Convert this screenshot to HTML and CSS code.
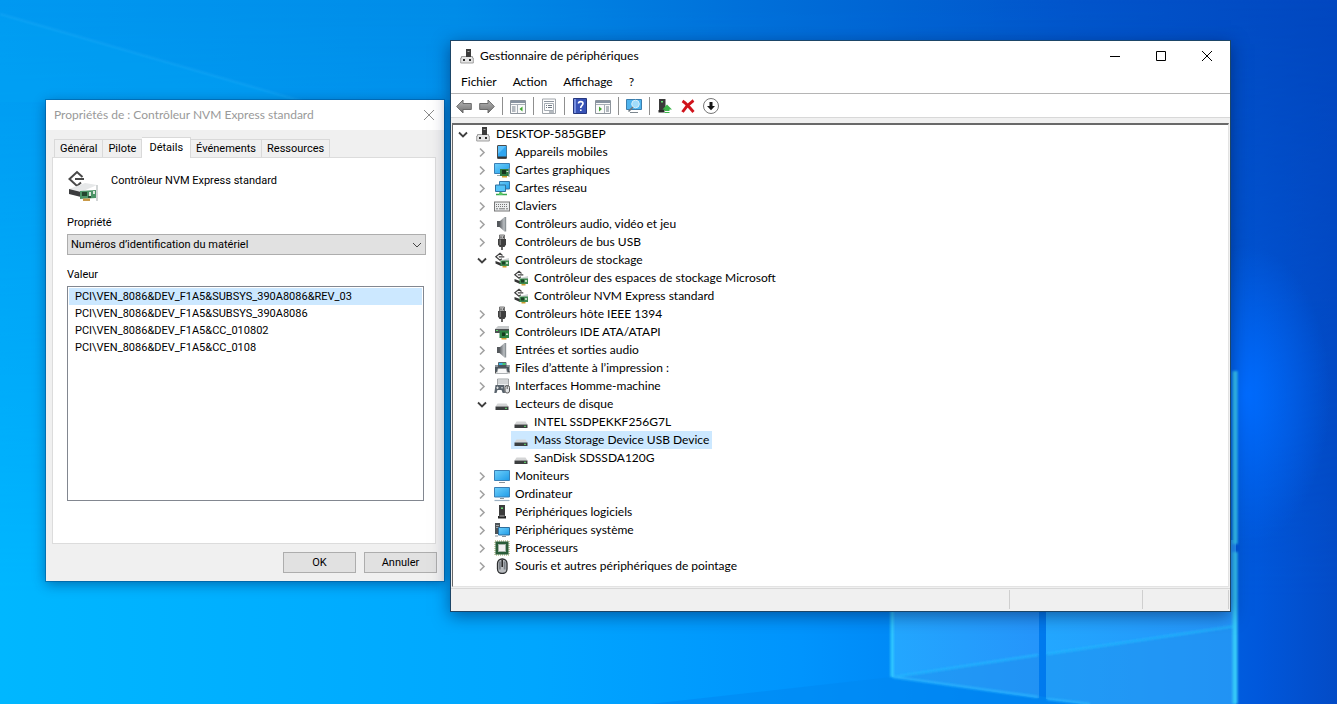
FILE: index.html
```html
<!DOCTYPE html>
<html lang="fr">
<head>
<meta charset="utf-8">
<title>Gestionnaire de périphériques</title>
<link rel="stylesheet" href="styles.css">
</head>
<body>
<svg class="sprites" aria-hidden="true">
  <defs>
    <linearGradient id="g-screen" x1="0" y1="0" x2="1" y2="1"><stop offset="0" stop-color="#6fd0fb"/><stop offset="1" stop-color="#1e9be8"/></linearGradient>
    <linearGradient id="g-grey" x1="0" y1="0" x2="0" y2="1"><stop offset="0" stop-color="#b8b8b8"/><stop offset="1" stop-color="#707070"/></linearGradient>
    <linearGradient id="g-speaker" x1="0" y1="0" x2="1" y2="0"><stop offset="0" stop-color="#5c6064"/><stop offset="1" stop-color="#c4c8cc"/></linearGradient>
  </defs>
  <symbol id="chev-right" viewBox="0 0 16 16"><path d="M6 4.500L10 8.500L6 12.500" fill="none" stroke="#a3a3a3" stroke-width="1.600"/></symbol>
  <symbol id="chev-down" viewBox="0 0 16 16"><path d="M4 6.500L8 10.500L12 6.500" fill="none" stroke="#404040" stroke-width="1.800"/></symbol>
  <symbol id="i-root" viewBox="0 0 16 16">
    <path d="M7 1h5v8H7z" fill="#3b3b3b"/><path d="M8.500 3h2v1h-2z" fill="#a8a8a8"/>
    <path d="M2.500 8.500h11V10h.8v5H1.700v-5h.8z" fill="#e6e6e6" stroke="#8c8c8c" stroke-width=".8"/>
    <path d="M7 5h5v4H7z" fill="#3b3b3b"/><path d="M4 11h2v2H4zM10 11h2v2h-2z" fill="#2e2e2e"/>
  </symbol>
  <symbol id="i-mobile" viewBox="0 0 16 16"><rect x="3.500" y="1.500" width="9" height="13" rx=".5" fill="#333" stroke="#4b4b4b"/><rect x="4" y="2" width="8.500" height="10.500" fill="#2fa5f0"/><path d="M4 2h8L4 10z" fill="#5cc0fb"/></symbol>
  <symbol id="i-display" viewBox="0 0 16 16">
    <path d="M.5 1.500h15v10H.5z" fill="url(#g-screen)" stroke="#3a7fb4"/><path d="M3 13.500h5" stroke="#9aa" />
    <path d="M6 7h9v7H6z" fill="#2f7a40"/><path d="M8 8h4v4H8z" fill="#17361d"/><path d="M12.500 9h2v1h-2z" fill="#d9dfd0"/><path d="M8 14h5v1.500H8z" fill="#cda12f"/><path d="M15 6v9" stroke="#8b9a8b"/>
  </symbol>
  <symbol id="i-network" viewBox="0 0 16 16">
    <path d="M5.500 1.500h10v7.500h-10z" fill="url(#g-screen)" stroke="#3377a8"/>
    <path d="M1.500 5h10v6.500h-10z" fill="#54c3f8" stroke="#2e719f"/>
    <path d="M6.500 12v2M2 14.500h11" stroke="#3aa84c" stroke-width="1.600"/><path d="M5 12.500h3.500V15H5z" fill="#58c766"/>
  </symbol>
  <symbol id="i-keyboard" viewBox="0 0 16 16"><rect x=".5" y="4" width="15" height="9" fill="#eceeef" stroke="#777"/><path d="M2 6.500h12M2 8.500h12" stroke="#777" stroke-dasharray="1 1"/><path d="M2 10.800h2M5 10.800h6M12 10.800h2" stroke="#777"/></symbol>
  <symbol id="i-audio" viewBox="0 0 16 16"><path d="M3 5h3v6H3z" fill="#54585c"/><path d="M5.500 5.500L10.500 1v14.500L5.500 11z" fill="url(#g-speaker)"/><path d="M11.300 1v14.500" stroke="#8d9397" stroke-width="1.800"/></symbol>
  <symbol id="i-usb" viewBox="0 0 16 16"><path d="M5.500 1h5v4h-5z" fill="#d8d8d8" stroke="#555" stroke-width=".8"/><path d="M6.500 2.300h1V4h-1zM8.800 2.300h1V4h-1z" fill="#333"/><path d="M4 5h8v5.500L10.500 13h-5L4 10.500z" fill="#3f3f3f"/><path d="M5.500 5.500h1.500V11H5.500z" fill="#777"/><path d="M8 12.500V16" stroke="#555" stroke-width="1.800"/></symbol>
  <symbol id="i-storage" viewBox="0 0 16 16">
    <path d="M8.500 3.500L6 1.300L1.800 4.800L6 8.300L7.800 6.800M4.800 4.800h5.500" fill="none" stroke="#404040" stroke-width="1.200"/>
    <path d="M7 8l8-2v4z" fill="#cfd3d4"/><path d="M1.500 9L7 11v3L1.500 11.500z" fill="#343434"/>
    <path d="M6.500 8.500H15V14H6.500z" fill="#3e8a50"/><path d="M8 9.500h3v3H8z" fill="#1b4225"/><path d="M12 10h2v2h-2z" fill="#b9d7bd"/><path d="M8.500 14h4v1.500h-4z" fill="#cc9c2e"/>
  </symbol>
  <symbol id="i-storage-large" viewBox="0 0 32 32">
    <path d="M15.500 7L10 2L2.500 9L10 16L14 12.500M8 9h9" fill="none" stroke="#484848" stroke-width="2"/>
    <path d="M2 19L18 13L30 15L14 22z" fill="#e6e8e9"/><path d="M2 19l12 3v5L2 24z" fill="#3b3c3e"/>
    <path d="M13 21l16-1v8l-16 1z" fill="#4c9467"/><path d="M15 22h5v4h-5z" fill="#24472f"/><path d="M22 22h2v4h-2zM26 21h2v3h-2z" fill="#dce8de"/><path d="M21 26h3v2h-3z" fill="#284f34"/><path d="M16 28.500h7V31h-7z" fill="#c99a4a"/><path d="M30 15v16" stroke="#bfc4c5" stroke-width="1.400"/>
  </symbol>
  <symbol id="i-ide" viewBox="0 0 16 16"><path d="M1 5l3-3h11v4H1z" fill="#c7cacb"/><path d="M1 5h14v4H1z" fill="#4f5254"/><path d="M2 6.500h2" stroke="#5ee06b"/><path d="M5.500 6.500H15V14H5.500z" fill="#2f8446"/><path d="M8 8.500h3v3.500H8z" fill="#173c20"/><path d="M12 9.500h2v1.500h-2z" fill="#dbe8da"/><path d="M7.500 14h5v1.500h-5z" fill="#cda12f"/></symbol>
  <symbol id="i-printer" viewBox="0 0 16 16"><path d="M4.500 2.500h7.500v4H4.500z" fill="#36b3e8" stroke="#56636c"/><path d="M8.500 3h3v2h-3z" fill="#4bc267"/><path d="M1 5h14.500v7H1z" fill="#4b555d"/><path d="M1 5h3v2H1zM12.500 5h3v2h-3z" fill="#8a949b"/><path d="M4 8.500h8.500l1 5h-11z" fill="#f7f7f7" stroke="#8a8f93" stroke-width=".7"/><path d="M1.500 11v2.500M15 11v2.500" stroke="#555"/></symbol>
  <symbol id="i-hid" viewBox="0 0 16 16"><path d="M3.500 1h11v7h-11z" fill="#eef0f1" stroke="#8b8f92" stroke-width=".8"/><path d="M4.500 3h9M4.500 5h9" stroke="#7c8185" stroke-dasharray="1 1"/><path d="M1.500 7h8.500l1 8H8.700L7.500 12h-4L2.500 15H.3z" fill="#59636c"/><path d="M3.500 8.500v2.500M2.200 9.800h2.600M7 9.800h2" stroke="#eee" stroke-width=".8"/><rect x="11" y="7.500" width="4.500" height="7.500" rx="2" fill="#e2e4e6" stroke="#555"/><path d="M13.200 8v3" stroke="#555"/></symbol>
  <symbol id="i-disk" viewBox="0 0 16 16"><path d="M3.500 7.500h9L14.500 10.500h-13z" fill="#d4d5d6"/><path d="M1.500 10.500h13V14h-13z" fill="#3c3f40"/><path d="M11 12.300h2" stroke="#63e06e"/></symbol>
  <symbol id="i-monitor" viewBox="0 0 16 16"><path d="M.5 2.500h15v10H.5z" fill="url(#g-screen)" stroke="#3a7fb4"/><path d="M5 14.500h6" stroke="#8a9299"/></symbol>
  <symbol id="i-computer" viewBox="0 0 16 16"><path d="M.5 1.500h15v9.500H.5z" fill="url(#g-screen)" stroke="#3a7fb4"/><path d="M6 12.500h4" stroke="#8a9299"/><path d="M.5 14.500h15" stroke="#9db2c4" stroke-width="1.200"/></symbol>
  <symbol id="i-software" viewBox="0 0 16 16"><path d="M5 1h6v11H5z" fill="#3c3c3c"/><path d="M7 3.500h2V5H7z" fill="#6be078"/><path d="M4 12h8v2.500H4z" fill="#262626"/><path d="M5.500 12h5" stroke="#aaa"/></symbol>
  <symbol id="i-system" viewBox="0 0 16 16"><path d="M1 1h5v11H1z" fill="#4d5357"/><path d="M2 3.500h3M2 5.500h3" stroke="#b5babd" stroke-width=".8"/><path d="M4.500 5.500h11v7.500h-11z" fill="url(#g-screen)" stroke="#2d6d9c"/><path d="M8 14.500h4M1 14h3" stroke="#8a9299"/></symbol>
  <symbol id="i-cpu" viewBox="0 0 16 16"><rect x="1" y="1" width="14" height="14" fill="none" stroke="#8e9c5a" stroke-dasharray="1 1"/><rect x="1.500" y="1.500" width="13" height="13" fill="#2a5d39"/><rect x="4.500" y="4.500" width="7" height="7" fill="#f1f1f1" stroke="#a6b5aa"/></symbol>
  <symbol id="i-mouse" viewBox="0 0 16 16"><rect x="3.500" y="1" width="9.500" height="14.500" rx="4.500" fill="#b9bcc0" stroke="#2d2f31" stroke-width="1.300"/><path d="M5 3.500h1.800v8H5zM9.700 3.500h1.800v8H9.700z" fill="#7b8086"/><path d="M8.200 2v7" stroke="#222" stroke-width="1.500"/></symbol>
  <symbol id="t-back" viewBox="0 0 16 16"><path d="M.7 8.500L7 2v3.500h8.300v6H7V15z" fill="url(#g-grey)" stroke="#6b6b6b"/></symbol>
  <symbol id="t-forward" viewBox="0 0 16 16"><path d="M15.300 8.500L9 2v3.500H.7v6H9V15z" fill="url(#g-grey)" stroke="#6b6b6b"/></symbol>
  <symbol id="t-tree" viewBox="0 0 16 16"><path d="M.5 2.500h15v13H.5z" fill="#fafafa" stroke="#8d949c"/><path d="M1 4h14" stroke="#8792a0" stroke-width="2"/><path d="M1 6.500h14M7.500 7v8" stroke="#a6adb5"/><path d="M2 9h3.500M2 11h3.500M2 13h3.500" stroke="#6f7a86"/><path d="M12.500 8.500v5L9.500 11z" fill="#3fa52f"/></symbol>
  <symbol id="t-props" viewBox="0 0 16 16"><path d="M1.500 1h13v14.500h-13z" fill="#fdfdfd" stroke="#a1a6ab"/><path d="M3 3.500h10" stroke="#8c949d"/><path d="M3.500 5.500h9v7h-9z" fill="none" stroke="#a6adb4"/><path d="M5 7.500h1M7 7.500h4M5 9.500h1M7 9.500h4M8 14h5" stroke="#6f7983"/></symbol>
  <symbol id="t-help" viewBox="0 0 16 16"><path d="M1.500.5h13v15h-13z" fill="#3853b6" stroke="#26377e"/><path d="M2 1h2v14H2z" fill="#7890df"/><path d="M6.500 5.500C6.500 3 11 3 11 5.500C11 7.500 8.700 7.300 8.700 10" fill="none" stroke="#fff" stroke-width="1.600"/><path d="M8 11.500h1.600V13H8z" fill="#fff"/></symbol>
  <symbol id="t-action" viewBox="0 0 16 16"><path d="M.5 2.500h15v13H.5z" fill="#fafafa" stroke="#8d949c"/><path d="M1 4h14" stroke="#8792a0" stroke-width="2"/><path d="M1 6.500h14M9.500 7v8" stroke="#a6adb5"/><path d="M11 9h3M11 11h3M11 13h3" stroke="#6f7a86"/><path d="M4 8.500v5L7 11z" fill="#3fa52f"/></symbol>
  <symbol id="t-scan" viewBox="0 0 16 16"><path d="M.5 1.500h15v10H.5z" fill="#4fb4ee" stroke="#3c7fae"/><path d="M4 14.500h8" stroke="#7c868e"/><circle cx="9.500" cy="6" r="3.800" fill="#a0dcfa" stroke="#d7effb" stroke-width="1"/><path d="M7 9L2.500 13.500" stroke="#6d777e" stroke-width="1.600"/></symbol>
  <symbol id="t-update" viewBox="0 0 16 16"><path d="M2 1h6.500v11H2z" fill="#3a3a3a"/><path d="M4 3h2v1.500H4z" fill="#67dd74"/><path d="M1.500 12h6v2.500h-6z" fill="#2a2a2a"/><path d="M10 6.500L15 11.500h-2.500V13h-5v-1.500H5.500z" fill="#3db54a"/><path d="M7.500 14.500h5" stroke="#3db54a"/></symbol>
  <symbol id="t-remove" viewBox="0 0 16 16"><path d="M2.500 3Q7 6 13.500 14M13.500 2.500Q7 7 2.500 14" fill="none" stroke="#d0131b" stroke-width="2.800"/></symbol>
  <symbol id="t-disable" viewBox="0 0 16 16"><circle cx="8" cy="8" r="7.500" fill="#fff" stroke="#777" stroke-width="1"/><path d="M6.500 4h3v4h2.500L8 12.300L4 8h2.500z" fill="#151515"/></symbol>
</svg>

<svg class="wallpaper" viewBox="0 0 1337 704" preserveAspectRatio="none" aria-hidden="true">
  <defs>
    <linearGradient id="w-base" x1="0" y1="0" x2="1" y2="0">
      <stop offset="0" stop-color="#0099f1"/><stop offset=".34" stop-color="#008ce8"/><stop offset=".55" stop-color="#0071da"/><stop offset=".8" stop-color="#0255cb"/><stop offset="1" stop-color="#0247c0"/>
    </linearGradient>
    <linearGradient id="w-low" x1="0" y1="0" x2="1" y2="0">
      <stop offset="0" stop-color="#00b7ff"/><stop offset=".4" stop-color="#00a6ff"/><stop offset=".6" stop-color="#0094fd"/><stop offset=".85" stop-color="#0070e8"/><stop offset=".94" stop-color="#0058dc"/><stop offset="1" stop-color="#034bc6"/>
    </linearGradient>
    <linearGradient id="w-fade" x1="0" y1="0" x2="0" y2="1"><stop offset="0" stop-color="#000"/><stop offset=".85" stop-color="#fff"/></linearGradient>
    <mask id="w-mask"><rect width="1337" height="704" fill="url(#w-fade)"/></mask>
    <radialGradient id="w-glow" gradientUnits="userSpaceOnUse" cx="0" cy="0" r="1" gradientTransform="translate(1245 395) scale(85 150)"><stop offset="0" stop-color="#006cff"/><stop offset="1" stop-color="#006cff" stop-opacity="0"/></radialGradient>
    <linearGradient id="w-pane" x1="0" y1="0" x2="1" y2="0"><stop offset="0" stop-color="#23a7ff"/><stop offset="1" stop-color="#2595fb"/></linearGradient>
    <filter id="w-soft"><feGaussianBlur stdDeviation="1"/></filter>
  </defs>
  <rect width="1337" height="704" fill="url(#w-base)"/>
  <rect width="1337" height="704" fill="url(#w-low)" mask="url(#w-mask)"/>
  <path d="M0 14L305 102H0z" fill="#00a4f4" opacity=".3"/>
  <path d="M0 14L305 102" stroke="#31b6fb" stroke-width="1.500" opacity=".4" filter="url(#w-soft)"/>
  <rect x="1100" y="200" width="237" height="400" fill="url(#w-glow)"/>
  <path d="M650 704L892 677L1100 704z" fill="#0088f2" opacity=".6"/>
  <path d="M892 540H1039V698L892 677z" fill="url(#w-pane)"/>
  <path d="M1046 540H1236V704H1085L1046 699z" fill="url(#w-pane)"/>
  <path d="M892 677L1039 655V698zM1046 654L1236 625V704H1085L1046 699z" fill="#1d8fee" opacity=".5"/>
  <g fill="none" filter="url(#w-soft)">
    <path d="M893 677L1038 655M1047 654L1236 626" stroke="#24b6ff" stroke-width="2"/>
    <path d="M893 677L1038 697M1047 699L1090 704" stroke="#2bb5ff" stroke-width="2"/>
    <path d="M892 560V677" stroke="#32ccff" stroke-width="3"/>
    <path d="M1235 371V544M1235 552V704" stroke="#35c8f8" stroke-width="5"/>
  </g>
</svg>

<section class="window dialog" aria-label="Propriétés">
  <header class="dialog-title">
    <h2>Propriétés de : Contrôleur NVM Express standard</h2>
    <button class="dialog-close" aria-label="Fermer"><svg viewBox="0 0 12 12"><path d="M1 1L11 11M11 1L1 11"/></svg></button>
  </header>
  <div class="dialog-body">
    <div class="tabs" role="tablist">
      <button class="tab" role="tab">Général</button>
      <button class="tab tab-wide" role="tab">Pilote</button>
      <button class="tab tab-active" role="tab" aria-selected="true">Détails</button>
      <button class="tab" role="tab">Événements</button>
      <button class="tab" role="tab">Ressources</button>
    </div>
    <div class="panel" role="tabpanel">
      <div class="device">
        <svg class="device-icon"><use href="#i-storage-large"/></svg>
        <span>Contrôleur NVM Express standard</span>
      </div>
      <label class="field-label" for="prop">Propriété</label>
      <div class="combo">
        <select id="prop"><option>Numéros d’identification du matériel</option></select>
        <svg class="combo-arrow" viewBox="0 0 10 10"><path d="M1 3L5 7L9 3"/></svg>
      </div>
      <span class="field-label" id="val-label">Valeur</span>
      <ul class="values" role="listbox" aria-labelledby="val-label">
        <li role="option" aria-selected="true" class="chosen">PCI\VEN_8086&amp;DEV_F1A5&amp;SUBSYS_390A8086&amp;REV_03</li>
        <li role="option">PCI\VEN_8086&amp;DEV_F1A5&amp;SUBSYS_390A8086</li>
        <li role="option">PCI\VEN_8086&amp;DEV_F1A5&amp;CC_010802</li>
        <li role="option">PCI\VEN_8086&amp;DEV_F1A5&amp;CC_0108</li>
      </ul>
    </div>
    <footer class="dialog-buttons">
      <button class="push">OK</button>
      <button class="push">Annuler</button>
    </footer>
  </div>
</section>

<section class="window manager" aria-label="Gestionnaire de périphériques">
  <header class="titlebar">
    <svg class="icon"><use href="#i-root"/></svg>
    <h1>Gestionnaire de périphériques</h1>
    <div class="caption">
      <button aria-label="Réduire"><svg viewBox="0 0 12 12"><path d="M1 6.500H11"/></svg></button>
      <button aria-label="Agrandir"><svg viewBox="0 0 12 12"><path d="M1.500 1.500H10.500V10.500H1.500z"/></svg></button>
      <button aria-label="Fermer"><svg viewBox="0 0 12 12"><path d="M1 1L11 11M11 1L1 11"/></svg></button>
    </div>
  </header>
  <nav class="menubar">
    <button>Fichier</button><button>Action</button><button>Affichage</button><button>?</button>
  </nav>
  <div class="toolbar" role="toolbar">
    <button aria-label="Précédent"><svg class="icon"><use href="#t-back"/></svg></button>
    <button aria-label="Suivant"><svg class="icon"><use href="#t-forward"/></svg></button>
    <i class="sep"></i>
    <button aria-label="Arborescence"><svg class="icon"><use href="#t-tree"/></svg></button>
    <i class="sep"></i>
    <button aria-label="Propriétés"><svg class="icon"><use href="#t-props"/></svg></button>
    <i class="sep"></i>
    <button aria-label="Aide"><svg class="icon"><use href="#t-help"/></svg></button>
    <button aria-label="Volet Action"><svg class="icon"><use href="#t-action"/></svg></button>
    <i class="sep"></i>
    <button aria-label="Rechercher"><svg class="icon"><use href="#t-scan"/></svg></button>
    <i class="sep"></i>
    <button aria-label="Mettre à jour"><svg class="icon"><use href="#t-update"/></svg></button>
    <button aria-label="Désinstaller"><svg class="icon"><use href="#t-remove"/></svg></button>
    <button aria-label="Désactiver"><svg class="icon"><use href="#t-disable"/></svg></button>
  </div>
  <div class="view">
    <ul class="tree" role="tree">
      <li><div class="row"><svg class="chev"><use href="#chev-down"/></svg><span class="node"><svg class="icon"><use href="#i-root"/></svg>DESKTOP-585GBEP</span></div>
        <ul>
          <li><div class="row"><svg class="chev"><use href="#chev-right"/></svg><span class="node"><svg class="icon"><use href="#i-mobile"/></svg>Appareils mobiles</span></div></li>
          <li><div class="row"><svg class="chev"><use href="#chev-right"/></svg><span class="node"><svg class="icon"><use href="#i-display"/></svg>Cartes graphiques</span></div></li>
          <li><div class="row"><svg class="chev"><use href="#chev-right"/></svg><span class="node"><svg class="icon"><use href="#i-network"/></svg>Cartes réseau</span></div></li>
          <li><div class="row"><svg class="chev"><use href="#chev-right"/></svg><span class="node"><svg class="icon"><use href="#i-keyboard"/></svg>Claviers</span></div></li>
          <li><div class="row"><svg class="chev"><use href="#chev-right"/></svg><span class="node"><svg class="icon"><use href="#i-audio"/></svg>Contrôleurs audio, vidéo et jeu</span></div></li>
          <li><div class="row"><svg class="chev"><use href="#chev-right"/></svg><span class="node"><svg class="icon"><use href="#i-usb"/></svg>Contrôleurs de bus USB</span></div></li>
          <li><div class="row"><svg class="chev"><use href="#chev-down"/></svg><span class="node"><svg class="icon"><use href="#i-storage"/></svg>Contrôleurs de stockage</span></div>
            <ul>
              <li><div class="row leaf"><span class="node"><svg class="icon"><use href="#i-storage"/></svg>Contrôleur des espaces de stockage Microsoft</span></div></li>
              <li><div class="row leaf"><span class="node"><svg class="icon"><use href="#i-storage"/></svg>Contrôleur NVM Express standard</span></div></li>
            </ul></li>
          <li><div class="row"><svg class="chev"><use href="#chev-right"/></svg><span class="node"><svg class="icon"><use href="#i-usb"/></svg>Contrôleurs hôte IEEE 1394</span></div></li>
          <li><div class="row"><svg class="chev"><use href="#chev-right"/></svg><span class="node"><svg class="icon"><use href="#i-ide"/></svg>Contrôleurs IDE ATA/ATAPI</span></div></li>
          <li><div class="row"><svg class="chev"><use href="#chev-right"/></svg><span class="node"><svg class="icon"><use href="#i-audio"/></svg>Entrées et sorties audio</span></div></li>
          <li><div class="row"><svg class="chev"><use href="#chev-right"/></svg><span class="node"><svg class="icon"><use href="#i-printer"/></svg>Files d’attente à l’impression :</span></div></li>
          <li><div class="row"><svg class="chev"><use href="#chev-right"/></svg><span class="node"><svg class="icon"><use href="#i-hid"/></svg>Interfaces Homme-machine</span></div></li>
          <li><div class="row"><svg class="chev"><use href="#chev-down"/></svg><span class="node"><svg class="icon"><use href="#i-disk"/></svg>Lecteurs de disque</span></div>
            <ul>
              <li><div class="row leaf"><span class="node"><svg class="icon"><use href="#i-disk"/></svg>INTEL SSDPEKKF256G7L</span></div></li>
              <li><div class="row leaf"><span class="node selected"><svg class="icon"><use href="#i-disk"/></svg>Mass Storage Device USB Device</span></div></li>
              <li><div class="row leaf"><span class="node"><svg class="icon"><use href="#i-disk"/></svg>SanDisk SDSSDA120G</span></div></li>
            </ul></li>
          <li><div class="row"><svg class="chev"><use href="#chev-right"/></svg><span class="node"><svg class="icon"><use href="#i-monitor"/></svg>Moniteurs</span></div></li>
          <li><div class="row"><svg class="chev"><use href="#chev-right"/></svg><span class="node"><svg class="icon"><use href="#i-computer"/></svg>Ordinateur</span></div></li>
          <li><div class="row"><svg class="chev"><use href="#chev-right"/></svg><span class="node"><svg class="icon"><use href="#i-software"/></svg>Périphériques logiciels</span></div></li>
          <li><div class="row"><svg class="chev"><use href="#chev-right"/></svg><span class="node"><svg class="icon"><use href="#i-system"/></svg>Périphériques système</span></div></li>
          <li><div class="row"><svg class="chev"><use href="#chev-right"/></svg><span class="node"><svg class="icon"><use href="#i-cpu"/></svg>Processeurs</span></div></li>
          <li><div class="row"><svg class="chev"><use href="#chev-right"/></svg><span class="node"><svg class="icon"><use href="#i-mouse"/></svg>Souris et autres périphériques de pointage</span></div></li>
        </ul></li>
    </ul>
  </div>
  <footer class="statusbar"><span class="status-main"></span><span class="status-mid"></span><span class="status-end"></span></footer>
</section>
</body>
</html>
```
FILE: styles.css
```css
* { box-sizing: border-box; }

body {
  margin: 0;
  min-height: 100vh;
  overflow: hidden;
  background: #0078d7;
  color: #000;
  font: 12px/18px Lato, "Open Sans", sans-serif;
}

h1, h2 { margin: 0; font-size: 12px; font-weight: 400; }
ul { margin: 0; padding: 0; list-style: none; }

button {
  margin: 0;
  padding: 0;
  border: 0;
  background: none;
  color: inherit;
  font: inherit;
}

.sprites { position: absolute; width: 0; height: 0; }
.wallpaper { position: absolute; inset: 0; width: 100%; height: 100%; }
.icon { display: block; flex: none; width: 16px; height: 16px; }

.window { position: absolute; display: flex; flex-direction: column; }

/* Properties dialog */
.dialog {
  top: 100px;
  left: 46px;
  width: 398px;
  background: #f0f0f0;
  box-shadow: 0 0 0 1px rgba(0, 70, 130, .4), 0 3px 12px rgba(0, 20, 70, .45);
  font: 11px/17px Roboto, "Liberation Sans", sans-serif;
}

.dialog-title {
  display: flex;
  align-items: center;
  justify-content: space-between;
  height: 30px;
  padding: 0 9px 0 8px;
  background: #fff;
  color: #999;
  font: 12px/18px Lato, "Open Sans", sans-serif;
}

.dialog-close { display: flex; }
.dialog-close svg { width: 12px; height: 12px; fill: none; stroke: #8a8a8a; }

.dialog-body { display: flex; flex-direction: column; padding: 7px 7px 8px 6px; }

.tabs { display: flex; align-items: flex-end; padding-left: 2px; }

.tab {
  height: 18px;
  padding: 0 5px;
  border: 1px solid #d9d9d9;
  border-width: 1px 1px 0 0;
  background: #f0f0f0;
}
.tab:first-child { border-left-width: 1px; }
.tab-active {
  position: relative;
  height: 21px;
  margin-bottom: -1px;
  padding: 0 7px 2px;
  background: #fff;
}

.panel {
  display: flex;
  flex-direction: column;
  padding: 12px 10px 42px 14px;
  margin-right: 1px;
  border: 1px solid #dcdcdc;
  background: #fff;
}

.device { display: flex; gap: 12px; margin-bottom: 12px; line-height: 22px; }
.device-icon { width: 32px; height: 32px; }

.field-label { line-height: 17px; margin-bottom: 3px; }

.combo { display: grid; align-items: center; margin: 0 -1px 11px 0; }
.combo select {
  grid-area: 1 / 1;
  height: 21px;
  padding: 0 3px;
  border: 1px solid #adadad;
  border-radius: 0;
  background: #e1e1e1;
  color: #000;
  font: inherit;
  appearance: none;
}
.combo-arrow {
  grid-area: 1 / 1;
  justify-self: end;
  width: 10px;
  height: 10px;
  margin-right: 4px;
  fill: none;
  stroke: #444;
  pointer-events: none;
}

.values {
  min-height: 215px;
  margin-right: 1px;
  padding: 1px;
  border: 1px solid #828790;
}
.values li { padding: 0 6px; line-height: 17px; }
.values .chosen { background: #cce8ff; }

.dialog-buttons { display: flex; justify-content: flex-end; gap: 8px; margin-top: 8px; }
.push { width: 73px; height: 21px; border: 1px solid #adadad; background: #e1e1e1; }

/* Device manager */
.manager {
  top: 40px;
  left: 450px;
  right: 106px;
  border: 1px solid #1d4668;
  background: #fff;
  box-shadow: 0 4px 16px rgba(0, 20, 70, .5);
}

.titlebar { display: flex; align-items: center; height: 30px; padding-left: 8px; gap: 5px; }
.caption { display: flex; margin-left: auto; }
.caption button { display: flex; align-items: center; justify-content: center; width: 46px; height: 30px; }
.caption svg { width: 12px; height: 12px; fill: none; stroke: #000; }

.menubar { display: flex; gap: 16px; height: 22px; padding: 0 10px; }

.toolbar {
  display: flex;
  align-items: center;
  gap: 7px;
  height: 25px;
  padding: 0 5px;
  border-top: 1px solid #b5b5b5;
  border-bottom: 1px solid #d8d8d8;
}
.sep { width: 1px; height: 18px; background: #8f8f8f; }

.view { padding: 5px 1px 1px; background: #f0f0f0; }
.tree {
  min-height: 464px;
  border: solid #696969;
  border-width: 2px 1px 1px;
  border-right-color: #e3e3e3;
  border-bottom-color: #e3e3e3;
  background: #fff;
}
.tree ul { padding-left: 19px; }
.row { display: flex; align-items: center; height: 18px; }
.leaf { padding-left: 20px; }
.chev { flex: none; width: 16px; height: 16px; margin: 0 2px; }
.node { display: flex; align-items: center; gap: 5px; padding: 0 3px 0 2px; white-space: nowrap; }
.selected { background: #cce8ff; }

.statusbar { display: flex; height: 23px; padding: 1px 1px 2px 0; border-top: 1px solid #d8d8d8; background: #f0f0f0; }
.statusbar span { border-right: 1px solid #cfcfcf; }
.status-main { flex: 1; }
.status-mid { width: 133px; }
.status-end { width: 86px; }
```
